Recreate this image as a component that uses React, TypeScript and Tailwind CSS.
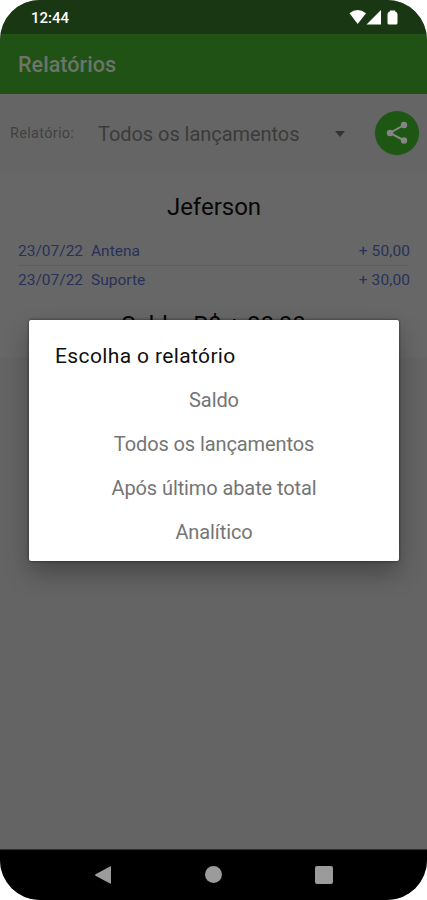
const entries = [
  { date: "23/07/22", name: "Antena", value: "+ 50,00" },
  { date: "23/07/22", name: "Suporte", value: "+ 30,00" },
];

const reports = ["Saldo", "Todos os lançamentos", "Após último abate total", "Analítico"];

function StatusBar() {
  return (
    <div className="flex h-[34px] shrink-0 items-center justify-between bg-[#1a3713] pl-[31px] pr-[28px] text-white">
      <span className="pt-[2px] text-[15px] font-medium leading-none">12:44</span>
      <svg width="50" height="16" viewBox="0 0 50 16" fill="currentColor">
        <path d="M0.500 4.200Q8.500 -2 17 4.200L8.700 15Z" />
        <path d="M32 1V15.500H17.500Z" />
        <path d="M41 1.500h5v.7q2.500 .8 2.500 3V14q0 1.500-1.500 1.500h-7Q38.500 15.500 38.500 14V5.200q0-2.200 2.500-3Z" />
      </svg>
    </div>
  );
}

function ReportFilter() {
  return (
    <div className="flex h-[79px] shrink-0 items-center bg-[#656565] pl-[10px] pr-2">
      <span className="w-[88px] pt-px text-[14.5px] tracking-[0.3px] text-[#414141]">Relatório:</span>
      <span className="text-[20px] tracking-[-0.05px] text-[#3b3b3b]">Todos os lançamentos</span>
      <svg className="ml-auto mr-[30px]" width="10" height="6" viewBox="0 0 10 6" fill="#333333">
        <path d="M0 0h10L5 6Z" />
      </svg>
      <button className="-mt-px flex size-11 items-center justify-center rounded-full bg-[#1d5713] shadow-xs">
        <svg width="22" height="24" viewBox="0 0 22 24" fill="#858585">
          <path d="M18 4L4 12l14 7.500" fill="none" stroke="#858585" strokeWidth="2" />
          <circle cx="18" cy="4" r="3.200" />
          <circle cx="4" cy="12" r="3.200" />
          <circle cx="18" cy="19.500" r="3.200" />
        </svg>
      </button>
    </div>
  );
}

function Report() {
  return (
    <div className="h-[185px] shrink-0 bg-[#676767] px-[18px] pt-[18px]">
      <h2 className="pl-px text-center text-[24px] leading-8 text-[#080808]">Jeferson</h2>
      <div className="mt-[14px] text-[15.5px] text-[#29315a]">
        {entries.map((entry) => (
          <div
            key={entry.name}
            className="flex h-[29px] items-center border-b border-[#5e5e5e] pt-px last:border-transparent"
          >
            <span className="w-[73px]">{entry.date}</span>
            <span>{entry.name}</span>
            <span className="-mr-px ml-auto tracking-[0.1px]">{entry.value}</span>
          </div>
        ))}
      </div>
      <p className="mt-[14px] text-center text-[24px] leading-8 text-[#080808]">Saldo: R$ + 80,00</p>
    </div>
  );
}

function ReportDialog() {
  return (
    <div className="absolute left-[29px] top-[320px] h-[241px] w-[370px] rounded-[2px] bg-white pt-[20px] shadow-[0_12px_24px_rgba(0,0,0,0.3),0_0_3px_rgba(0,0,0,0.6)]">
      <h3 className="pl-[26px] pt-px text-[21px] leading-[30px] tracking-[0.37px] text-[#101010]">
        Escolha o relatório
      </h3>
      <ul className="mt-[7px] text-center text-[20px] tracking-[-0.1px] text-[#757575]">
        {reports.map((report) => (
          <li key={report} className="flex h-11 items-center justify-center">
            {report}
          </li>
        ))}
      </ul>
    </div>
  );
}

function NavigationBar() {
  return (
    <div className="flex h-[51px] shrink-0 items-center justify-between border-t border-[#303030] bg-black px-[94px] pb-px text-[#9b9b9b]">
      <svg width="18" height="18" viewBox="0 0 18 18" fill="currentColor">
        <path d="M16 .5Q17 0 17 1v16q0 1-1 .5L1.500 9.700q-1-.7 0-1.400Z" />
      </svg>
      <span className="size-[17px] rounded-full bg-current" />
      <span className="size-[18px] rounded-[2px] bg-current" />
    </div>
  );
}

export default function App() {
  return (
    <div className="h-[900px] w-[427px] bg-white font-[Roboto,sans-serif]">
      <div className="relative flex h-full flex-col overflow-hidden rounded-[40px] bg-[#646464]">
        <StatusBar />
        <header className="flex h-[60px] shrink-0 items-center bg-[#205215] pl-[18px] pt-[2px]">
          <h1 className="text-[21.6px] font-medium text-[#6c746b]">Relatórios</h1>
        </header>
        <ReportFilter />
        <Report />
        <div className="flex-1" />
        <NavigationBar />
        <ReportDialog />
      </div>
    </div>
  );
}
